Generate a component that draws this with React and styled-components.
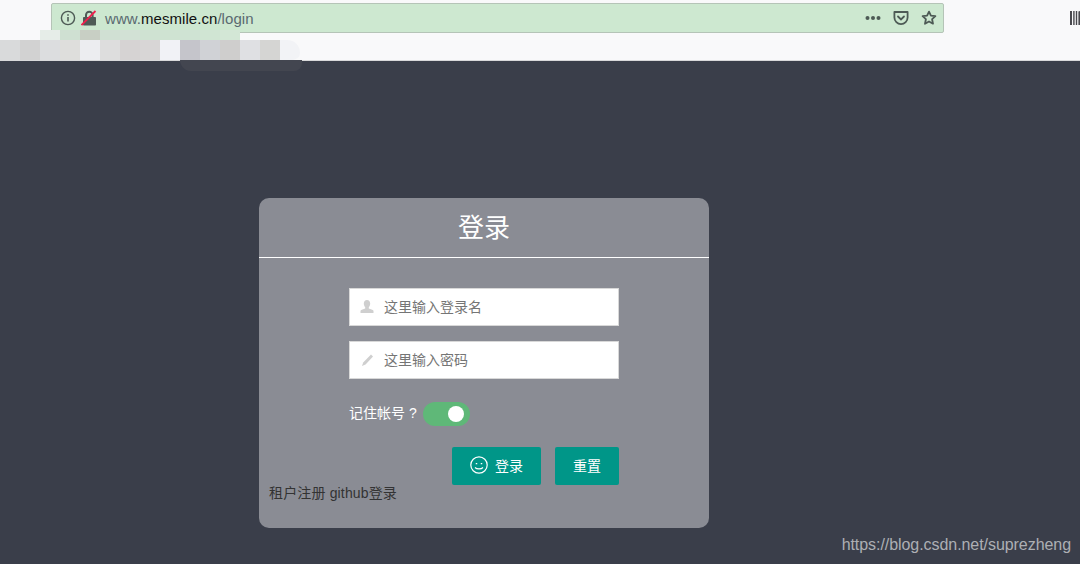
import React from "react";
import styled, { createGlobalStyle } from "styled-components";

const upperTiles = ["#e6ede8", "#cfe0d2", "#c8cfc4", "#d0e0d3", "#d2e1d5", "#cfe2d2", "#cfe3d2", "#cfe3d3", "#d0e5d3", "#d3e7d6"];
const mosaicTiles = ["#d9dadb", "#d2d2d2", "#dcdddf", "#dededc", "#ecedf0", "#dddddd", "#d6d3d3", "#d8d6d6", "#f1f2f6", "#c5c5cb", "#d0d2d6", "#cfcecd", "#dfe0e3", "#d5d5d3", "#f2f3f6"];

const GlobalStyle = createGlobalStyle`
  html, body {
    margin: 0;
    padding: 0;
    height: 100%;
    overflow: hidden;
    background: #3a3e4a;
    font-family: "Liberation Sans", "Noto Sans CJK SC", sans-serif;
  }
  * {
    box-sizing: border-box;
  }
`;

const Page = styled.div`
  width: 1080px;
  height: 564px;
  display: flex;
  flex-direction: column;
  position: relative;
`;

const BrowserBar = styled.header`
  height: 61px;
  flex: none;
  background: #f9f9fa;
  border-bottom: 1px solid #d8d8da;
  padding: 3px 0 0 51px;
  position: relative;
`;

const UrlRow = styled.div`
  display: flex;
  align-items: flex-start;
`;

const UrlBar = styled.div`
  width: 893px;
  height: 30px;
  background: #cde8d0;
  border: 1px solid #b5c4b7;
  border-radius: 2px;
  display: flex;
  align-items: center;
  padding: 0 6px 0 8px;
  color: #4d5a55;
`;

const UrlText = styled.div`
  margin-left: 8px;
  font-size: 15px;
  letter-spacing: 0.05px;
  color: #5a6a70;
  flex: 1;
  & b {
    font-weight: 400;
    color: #111;
  }
`;

const BarIcon = styled.svg`
  display: block;
  flex: none;
  margin-left: ${(p) => p.$gap || 0}px;
`;

const Library = styled.svg`
  display: block;
  margin: 8px 0 0 126px;
`;

const Mosaic = styled.div`
  position: absolute;
  left: 0;
  top: 30px;
  width: 302px;
  height: 41px;
  display: flex;
  flex-direction: column;
`;

const MosaicRow = styled.div`
  height: ${(p) => p.$height}px;
  padding-left: ${(p) => p.$indent}px;
  display: flex;
  flex: none;
`;

const TileStrip = styled.div`
  display: flex;
  overflow: hidden;
  border-radius: 0 14px 8px 0;
`;

const Tile = styled.span`
  width: 20px;
  height: 100%;
  flex: none;
  background: ${(p) => p.$color};
`;

const Smudge = styled.div`
  width: 122px;
  height: 11px;
  margin-left: 180px;
  background: #434650;
  border-radius: 0 0 16px 22px;
`;

const Main = styled.main`
  flex: 1;
  padding: 137px 0 0 259px;
`;

const Card = styled.section`
  width: 450px;
  height: 330px;
  background: #8a8c94;
  border-radius: 10px;
`;

const CardTitle = styled.h1`
  margin: 0;
  height: 60px;
  border-bottom: 1px solid #fff;
  color: #fff;
  font-size: 26px;
  font-weight: 400;
  line-height: 61px;
  text-align: center;
`;

const Form = styled.form`
  padding: 30px 90px 0;
  display: flex;
  flex-direction: column;
`;

const Field = styled.label`
  height: 38px;
  background: #fff;
  border: 1px solid #d8d8d8;
  display: flex;
  align-items: center;
  padding-left: 9px;
  margin-bottom: 15px;
`;

const FieldInput = styled.input`
  border: 0;
  outline: 0;
  background: none;
  flex: 1;
  min-width: 0;
  margin-left: 9px;
  padding: 0;
  font: inherit;
  font-size: 14px;
  &::placeholder {
    color: #757575;
    opacity: 1;
  }
`;

const RememberRow = styled.div`
  display: flex;
  align-items: center;
  height: 24px;
  margin-top: 8px;
  color: #fff;
  font-size: 14px;
`;

const RememberLabel = styled.span`
  padding-bottom: 4px;
`;

const Toggle = styled.span`
  width: 47px;
  height: 24px;
  margin-left: 6px;
  border-radius: 12px;
  background: #5fb878;
  display: flex;
  align-items: center;
  justify-content: flex-end;
  padding-right: 6px;
  &::after {
    content: "";
    width: 16px;
    height: 16px;
    border-radius: 50%;
    background: #fff;
  }
`;

const Actions = styled.div`
  display: flex;
  justify-content: flex-end;
  gap: 14px;
  margin-top: 21px;
`;

const Button = styled.button`
  width: ${(p) => p.$width}px;
  height: 38px;
  border: 0;
  border-radius: 2px;
  background: #009688;
  color: #fff;
  font: inherit;
  font-size: 14px;
  display: flex;
  align-items: center;
  justify-content: center;
  gap: 7px;
  padding: 0 0 2px;
`;

const CardLinks = styled.div`
  padding: 0 10px;
  color: #333;
  font-size: 14px;
  letter-spacing: 0.15px;
  line-height: 16px;
`;

const Watermark = styled.div`
  position: absolute;
  right: 9px;
  bottom: 10px;
  color: #adafb4;
  font-size: 16px;
  letter-spacing: -0.06px;
  line-height: 18px;
`;

const App = () => (
  <Page>
    <GlobalStyle />
    <BrowserBar>
      <UrlRow>
        <UrlBar>
          <BarIcon width="16" height="16" viewBox="0 0 16 16" fill="none" stroke="#4d5a55" strokeWidth="1.4">
            <circle cx="8" cy="8" r="6.6" />
            <path d="M8 7v4.4M8 4.2v1.6" strokeWidth="1.6" />
          </BarIcon>
          <BarIcon $gap={5} width="16" height="16" viewBox="0 0 16 16">
            <path d="M5 8V5a3.3 3.3 0 0 1 6.6 0v3" fill="none" stroke="#4f5b56" strokeWidth="2" />
            <rect x="2" y="7" width="13" height="8.5" rx="0.8" fill="#4f5b56" />
            <path d="M0.5 15 L14.5 1" stroke="#f0214d" strokeWidth="1.8" />
          </BarIcon>
          <UrlText>
            www.<b>mesmile.cn</b>/login
          </UrlText>
          <BarIcon width="16" height="6" viewBox="0 0 16 6" fill="#4d5a55">
            <circle cx="2.5" cy="3" r="2" />
            <circle cx="8" cy="3" r="2" />
            <circle cx="13.5" cy="3" r="2" />
          </BarIcon>
          <BarIcon $gap={12} width="16" height="16" viewBox="0 0 16 16" fill="none" stroke="#4d5a55" strokeWidth="1.8">
            <path d="M1.4 2h13.2v5.5a6.6 6.6 0 0 1-13.2 0z" strokeLinejoin="round" />
            <path d="M5 6.5l3 3 3-3" strokeLinecap="round" />
          </BarIcon>
          <BarIcon $gap={12} width="16" height="16" viewBox="0 0 16 16" fill="none" stroke="#4d5a55" strokeWidth="1.8">
            <path d="M8 1.6l1.9 4.1 4.5.5-3.3 3 .9 4.5L8 11.5l-4 2.2.9-4.5-3.3-3 4.5-.5z" strokeLinejoin="round" />
          </BarIcon>
        </UrlBar>
        <Library width="10" height="14" viewBox="0 0 10 14" fill="#4a4a4f">
          <rect x="0" y="0" width="2" height="14" />
          <rect x="3.2" y="0" width="1.4" height="14" />
          <rect x="5.8" y="0" width="1.4" height="14" />
          <path d="M8.4 0.4l1.6-.4v14h-1.6z" />
        </Library>
      </UrlRow>
      <Mosaic>
        <MosaicRow $height={10} $indent={40}>
          {upperTiles.map((color, i) => (
            <Tile key={i} $color={color} />
          ))}
        </MosaicRow>
        <MosaicRow $height={20} $indent={0}>
          <TileStrip>
            {mosaicTiles.map((color, i) => (
              <Tile key={i} $color={color} />
            ))}
          </TileStrip>
        </MosaicRow>
        <Smudge />
      </Mosaic>
    </BrowserBar>
    <Main>
      <Card>
        <CardTitle>登录</CardTitle>
        <Form>
          <Field>
            <svg width="16" height="16" viewBox="0 0 16 16" fill="#cfcfcf">
              <path d="M8 1c2 0 3.200 1.500 3.200 3.600 0 1.500-.6 2.800-1.400 3.600v1.300c1.500.5 4.200 1.200 4.700 2.300v2.200H1.500v-2.200c.5-1.100 3.200-1.800 4.700-2.300V8.200C5.400 7.400 4.800 6.100 4.800 4.600 4.800 2.500 6 1 8 1z" />
            </svg>
            <FieldInput placeholder="这里输入登录名" />
          </Field>
          <Field>
            <svg width="16" height="16" viewBox="0 0 16 16" fill="#cfcfcf">
              <path d="M12 2.500l2 2L6.500 12.500 3 14l1.200-3.500z" />
            </svg>
            <FieldInput placeholder="这里输入密码" />
          </Field>
          <RememberRow>
            <RememberLabel>记住帐号 ?</RememberLabel>
            <Toggle />
          </RememberRow>
          <Actions>
            <Button type="button" $width={89}>
              <svg width="18" height="18" viewBox="0 0 18 18" fill="none" stroke="#fff" strokeWidth="1.2">
                <circle cx="9" cy="9" r="8.2" />
                <path d="M5 11.500c1.800 1.800 6.200 1.800 8 0" />
                <path d="M6.500 7v1.200M11.500 7v1.200" strokeWidth="1.5" />
              </svg>
              登录
            </Button>
            <Button type="button" $width={64}>
              重置
            </Button>
          </Actions>
        </Form>
        <CardLinks>租户注册 github登录</CardLinks>
      </Card>
    </Main>
    <Watermark>https://blog.csdn.net/suprezheng</Watermark>
  </Page>
);

export default App;
